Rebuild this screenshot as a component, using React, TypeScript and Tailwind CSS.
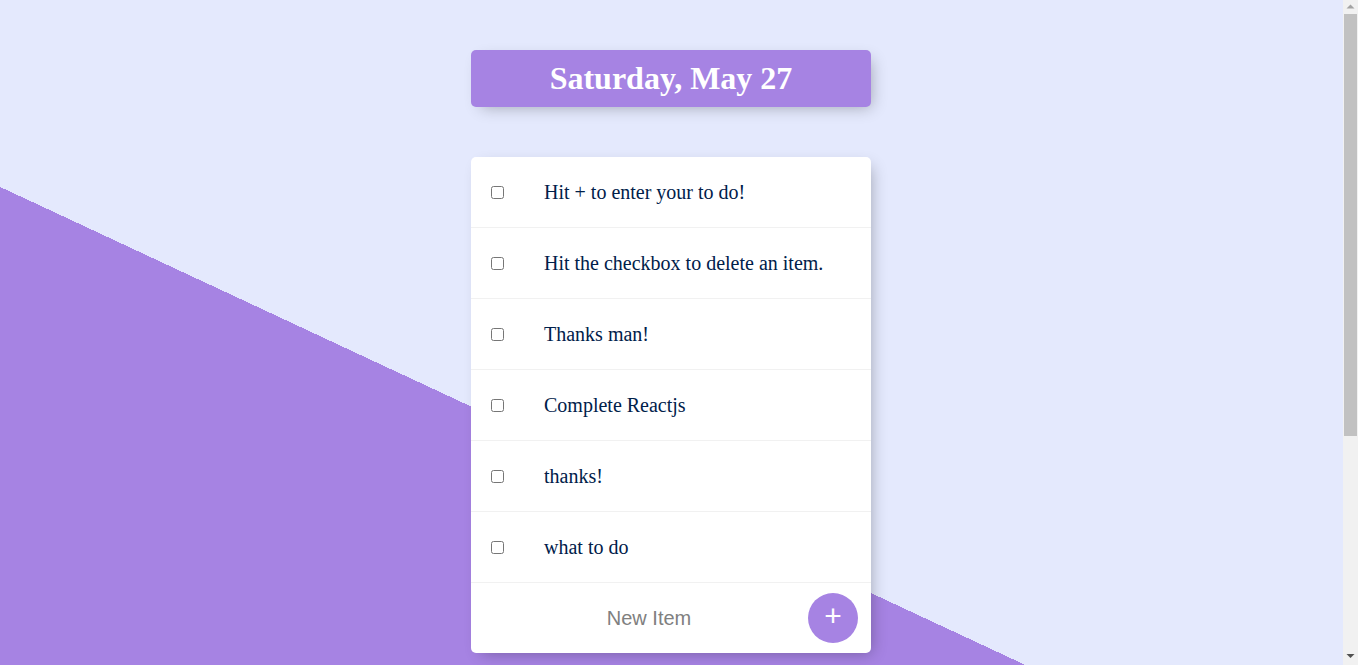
import React from "react";

const items = [
  "Hit + to enter your to do!",
  "Hit the checkbox to delete an item.",
  "Thanks man!",
  "Complete Reactjs",
  "thanks!",
  "what to do",
];

function Scrollbar() {
  return (
    <div className="flex h-full w-[15px] shrink-0 flex-col bg-[#f1f1f1]">
      <div className="h-[14px]">
        <svg width="15" height="14" viewBox="0 0 15 14">
          <polygon points="3.5,8.5 7.5,4.5 11.5,8.5" fill="#a3a3a3" />
        </svg>
      </div>
      <div className="mx-[1px] h-[422px] bg-[#c1c1c1]" />
      <div className="flex-1" />
      <div className="h-[14px]">
        <svg width="15" height="14" viewBox="0 0 15 14">
          <polygon points="3.5,3 11.5,3 7.5,7" fill="#505050" />
        </svg>
      </div>
    </div>
  );
}

export default function App() {
  return (
    <div className="flex h-screen w-full overflow-hidden bg-[#E4E9FD]">
      <div className="h-full min-w-0 flex-1 overflow-hidden">
        <div className="min-h-[1000px] w-full bg-[#E4E9FD] bg-[linear-gradient(25deg,#A683E3_50%,#E4E9FD_50%)] pr-[1px] pt-[50px] font-['Liberation_Serif',serif]">
          <div className="mx-auto flex h-[57px] w-[400px] items-center justify-center rounded-[5px] bg-[#A683E3] shadow-[5px_5px_15px_-5px_rgba(0,0,0,0.3)]">
            <h1 className="text-[32px] font-bold leading-[37px] text-white">Saturday, May 27</h1>
          </div>
          <div className="mx-auto mt-[50px] w-[400px] rounded-[5px] bg-white shadow-[5px_5px_15px_-5px_rgba(0,0,0,0.3)]">
            {items.map((t) => (
              <div key={t} className="flex min-h-[71px] items-center border-b border-[#F1F1F1]">
                <input type="checkbox" className="m-[20px] h-[13px] w-[13px]" />
                <p className="m-0 p-[20px] text-left text-[20px] font-extralight leading-[23px] text-[#00204a]">{t}</p>
              </div>
            ))}
            <form className="ml-[20px] flex h-[70px] items-center" onSubmit={(e) => e.preventDefault()}>
              <input
                type="text"
                placeholder="New Item"
                autoComplete="off"
                className="h-[60px] w-[316px] border-none p-0 text-center font-['Liberation_Sans',sans-serif] text-[20px] font-extralight placeholder:text-[grey] focus:outline-none"
              />
              <button
                type="submit"
                className="ml-[1px] flex h-[50px] w-[50px] items-center justify-center rounded-full bg-[#A683E3] pb-[5px] font-['Liberation_Sans',sans-serif] text-[30px] leading-none text-white"
              >
                +
              </button>
            </form>
          </div>
        </div>
      </div>
      <Scrollbar />
    </div>
  );
}
